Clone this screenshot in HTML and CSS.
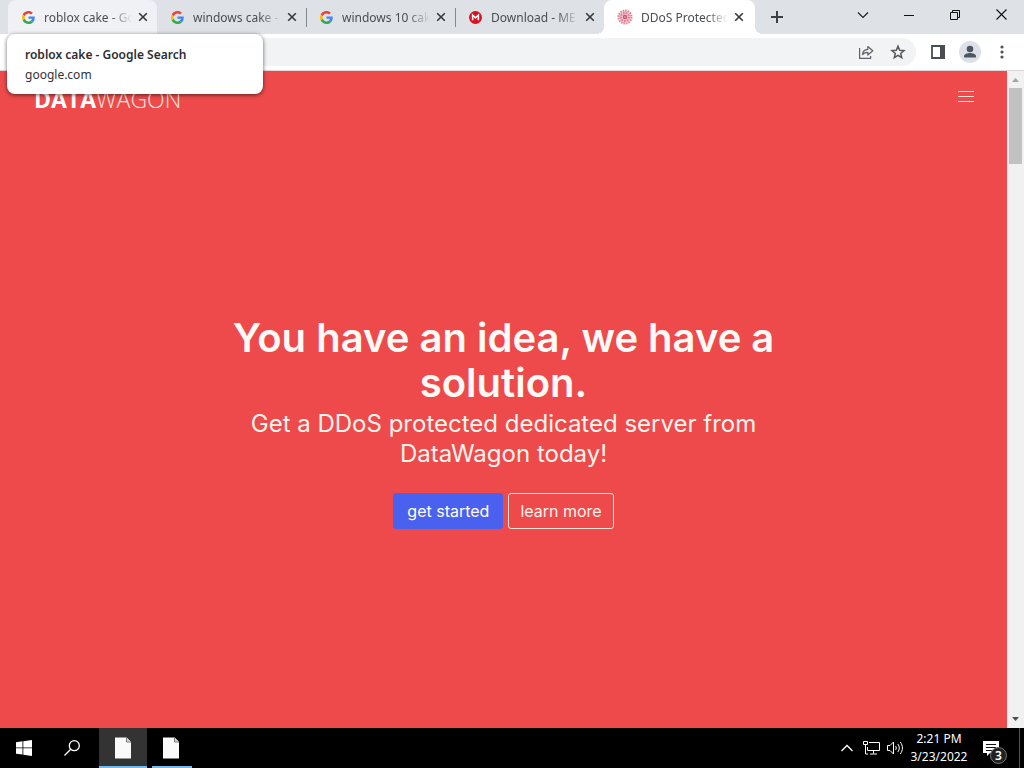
FILE: index.html
```html
<!DOCTYPE html>
<html lang="en">
<head>
  <meta charset="UTF-8">
  <meta name="viewport" content="width=device-width, initial-scale=1.0">
  <title>DDoS Protected Dedicated Servers - DataWagon</title>
  <link rel="stylesheet" href="styles.css">
</head>
<body>
  <!-- shared icons -->
  <svg class="defs" width="0" height="0" aria-hidden="true">
    <symbol id="google" viewBox="0 0 48 48">
      <path fill="#EA4335" d="M24 9.5c3.54 0 6.71 1.22 9.21 3.6l6.85-6.85C35.9 2.38 30.47 0 24 0 14.62 0 6.51 5.38 2.56 13.22l7.98 6.19C12.43 13.72 17.74 9.5 24 9.5z"/>
      <path fill="#4285F4" d="M46.98 24.55c0-1.57-.15-3.09-.38-4.55H24v9.02h12.94c-.58 2.96-2.26 5.48-4.78 7.18l7.73 6c4.51-4.18 7.09-10.36 7.09-17.65z"/>
      <path fill="#FBBC05" d="M10.53 28.59c-.48-1.45-.76-2.99-.76-4.59s.27-3.14.76-4.59l-7.98-6.19C.92 16.46 0 20.12 0 24s.92 7.54 2.56 10.78l7.97-6.19z"/>
      <path fill="#34A853" d="M24 48c6.48 0 11.93-2.13 15.89-5.81l-7.73-6c-2.15 1.45-4.92 2.3-8.16 2.3-6.26 0-11.57-4.22-13.47-9.91l-7.98 6.19C6.51 42.62 14.62 48 24 48z"/>
    </symbol>
    <symbol id="close" viewBox="0 0 10 10">
      <path d="M1.2 1.2l7.6 7.6M8.8 1.2L1.2 8.8" stroke="#35383c" stroke-width="1.6" fill="none"/>
    </symbol>
    <symbol id="file" viewBox="0 0 16 22">
      <path d="M0 .5h11.5L16 5v16.500H0z" fill="#fafafa"/>
      <path d="M11.500.5V5H16" fill="#ddd" stroke="#777" stroke-width="1"/>
    </symbol>
  </svg>

  <div class="browser">
    <div class="tab-strip">
      <div class="tab hovered">
        <svg class="favicon"><use href="#google"/></svg>
        <span class="tab-title">roblox cake - Go</span>
        <button class="tab-close" aria-label="Close tab"><svg width="10" height="10"><use href="#close"/></svg></button>
        <div class="tooltip" role="tooltip">
          <strong>roblox cake - Google Search</strong>
          <span>google.com</span>
        </div>
      </div>
      <div class="tab">
        <svg class="favicon"><use href="#google"/></svg>
        <span class="tab-title">windows cake -</span>
        <button class="tab-close" aria-label="Close tab"><svg width="10" height="10"><use href="#close"/></svg></button>
      </div>
      <div class="tab divided">
        <svg class="favicon"><use href="#google"/></svg>
        <span class="tab-title">windows 10 cak</span>
        <button class="tab-close" aria-label="Close tab"><svg width="10" height="10"><use href="#close"/></svg></button>
      </div>
      <div class="tab divided">
        <svg class="favicon" viewBox="0 0 14 14">
          <circle cx="7" cy="7" r="7" fill="#d9121f"/>
          <path d="M3.900 10V4.300L7 7.300l3.100-3V10" fill="none" stroke="#fff" stroke-width="1.700"/>
        </svg>
        <span class="tab-title">Download - ME</span>
        <button class="tab-close" aria-label="Close tab"><svg width="10" height="10"><use href="#close"/></svg></button>
      </div>
      <div class="tab active">
        <svg class="favicon wide" viewBox="0 0 16 16" fill="none" stroke="#dd8296">
          <circle cx="8" cy="8" r="6" fill="#f3ccd3" stroke="none"/>
          <circle cx="8" cy="8" r="6.500" stroke-width="2" stroke-dasharray="1.600 .9"/>
          <circle cx="8" cy="8" r="4" stroke-width="2" stroke-dasharray="1.800 .9"/>
          <circle cx="8" cy="8" r="1.500" stroke="#cc526d" stroke-width="1.500"/>
        </svg>
        <span class="tab-title">DDoS Protected</span>
        <button class="tab-close" aria-label="Close tab"><svg width="10" height="10"><use href="#close"/></svg></button>
      </div>
      <button class="new-tab" aria-label="New tab">
        <svg width="12" height="12" viewBox="0 0 12 12"><path d="M6 0v12M0 6h12" stroke="#3c4043" stroke-width="2"/></svg>
      </button>
      <div class="window-controls">
        <button aria-label="Search tabs"><svg width="12" height="12" viewBox="0 0 12 12"><path d="M1 3.500l5 5 5-5" fill="none" stroke="#222" stroke-width="1.200"/></svg></button>
        <button aria-label="Minimize"><svg width="10" height="10" viewBox="0 0 10 10"><path d="M0 5.500h10" stroke="#111"/></svg></button>
        <button aria-label="Restore"><svg width="10" height="10" viewBox="0 0 10 10"><path d="M.5 2.500h7v7h-7zM2.500 2.500v-2h7v7h-2" fill="none" stroke="#111"/></svg></button>
        <button aria-label="Close"><svg width="11" height="11" viewBox="0 0 11 11"><path d="M.5.5l10 10M10.500.5l-10 10" stroke="#111" stroke-width="1.100"/></svg></button>
      </div>
    </div>

    <div class="toolbar">
      <div class="omnibox">
        <input type="text" aria-label="Address">
        <button aria-label="Share">
          <svg width="16" height="16" viewBox="0 0 16 16" fill="none" stroke="#5f6368" stroke-width="1.200">
            <path d="M1.600 4v10.400h11V12"/>
            <path d="M4.500 10.500c.3-3.500 2.300-5 5.300-5.200V2.500l5 4.300-5 4.200V8.400c-2.500 0-4 .6-5.300 2.100z" stroke-linejoin="round"/>
          </svg>
        </button>
        <button aria-label="Bookmark this tab">
          <svg width="16" height="16" viewBox="0 0 16 16"><path d="M8 2.200l1.700 4 4.300.4-3.300 2.800 1 4.200L8 11.300l-3.700 2.300 1-4.200L2 6.600l4.300-.4z" fill="none" stroke="#55595e" stroke-width="1.500"/></svg>
        </button>
      </div>
      <div class="actions">
        <button aria-label="Side panel">
          <svg width="14" height="14" viewBox="0 0 14 14"><path d="M1 1h12v12H1z" fill="none" stroke="#4a4d51" stroke-width="1.800"/><path d="M9 0h5v14H9z" fill="#4a4d51"/></svg>
        </button>
        <button aria-label="Profile">
          <svg width="22" height="22" viewBox="0 0 22 22"><circle cx="11" cy="11" r="11" fill="#dde1e7"/><circle cx="11" cy="8" r="3.300" fill="#4c5663"/><path d="M5 16.500v-1.300C5 13 8.500 12 11 12s6 1 6 3.200v1.300z" fill="#4c5663"/></svg>
        </button>
        <button aria-label="Menu">
          <svg width="4" height="14" viewBox="0 0 4 14" fill="#505357"><circle cx="2" cy="2" r="1.600"/><circle cx="2" cy="7" r="1.600"/><circle cx="2" cy="12" r="1.600"/></svg>
        </button>
      </div>
    </div>

    <div class="viewport">
      <div class="page">
        <header class="site-header">
          <a class="logo" href="#"><b>DATA</b>WAGON</a>
          <button class="nav-toggle" aria-label="Toggle navigation">
            <svg width="16" height="12" viewBox="0 0 16 12"><path d="M0 .5h16M0 5.500h16M0 10.500h16" stroke="#ffe3d6"/></svg>
          </button>
        </header>
        <main class="hero">
          <h1>You have an idea, we have a solution.</h1>
          <p>Get a DDoS protected dedicated server from DataWagon today!</p>
          <div class="hero-buttons">
            <a class="btn btn-primary" href="#">get started</a>
            <a class="btn btn-outline" href="#">learn more</a>
          </div>
        </main>
      </div>
      <div class="scrollbar">
        <svg width="7" height="4" viewBox="0 0 7 4"><path d="M0 4l3.500-4L7 4z" fill="#a3a3a3"/></svg>
        <div class="scroll-track"><div class="scroll-thumb"></div></div>
        <svg width="7" height="4" viewBox="0 0 7 4"><path d="M0 0l3.500 4L7 0z" fill="#505050"/></svg>
      </div>
    </div>
  </div>

  <footer class="taskbar">
    <button class="task" aria-label="Start">
      <svg width="16" height="16" viewBox="0 0 16 16" fill="#fff"><path d="M0 2.200l6.500-.9v6.200H0zM7.300 1.200L16 0v7.500H7.300zM0 8.300h6.500v6.300L0 13.700zM7.300 8.300H16V16l-8.700-1.200z"/></svg>
    </button>
    <button class="task" aria-label="Search">
      <svg width="16" height="16" viewBox="0 0 16 16" fill="none" stroke="#fff" stroke-width="1.300"><circle cx="10.300" cy="5.700" r="5"/><path d="M6.700 9.300L.5 15.500"/></svg>
    </button>
    <button class="task app current" aria-label="Document"><svg width="16" height="22"><use href="#file"/></svg></button>
    <button class="task app open" aria-label="Document"><svg width="16" height="22"><use href="#file"/></svg></button>

    <div class="tray">
      <button aria-label="Show hidden icons"><svg width="12" height="8" viewBox="0 0 12 8"><path d="M.5 7L6 1.500 11.500 7" fill="none" stroke="#fff" stroke-width="1.300"/></svg></button>
      <button aria-label="Network">
        <svg width="17" height="14" viewBox="0 0 17 14" fill="none" stroke="#fff"><path d="M6 1.500h10.500v8H4.500V6M10.500 9.500v3M7 13h7M.5.5h4v3h-4zM2.500 3.500v9.500h2.500"/></svg>
      </button>
      <button aria-label="Volume">
        <svg width="17" height="14" viewBox="0 0 17 14" fill="none" stroke="#fff"><path d="M.5 4.500H3l3.500-3.500v12L3 9.500H.5zM8.500 5c1 1.200 1 2.800 0 4M10.800 3c2 2.300 2 5.700 0 8M13.200 1c3 3.500 3 8.500 0 12"/></svg>
      </button>
      <div class="clock"><time>2:21 PM</time><span>3/23/2022</span></div>
      <button class="notifications" aria-label="3 notifications">
        <svg width="16" height="15" viewBox="0 0 16 15"><path d="M0 0h16v12H7l-3 3v-3H0z" fill="#fff"/><path d="M3 3.500h10M3 6.500h10M3 9.500h7" stroke="#111"/></svg>
        <span class="badge">3</span>
      </button>
      <div class="show-desktop"></div>
    </div>
  </footer>
</body>
</html>
```
FILE: styles.css
```css
* {
  box-sizing: border-box;
}
body {
  margin: 0;
  height: 100vh;
  display: flex;
  flex-direction: column;
  overflow: hidden;
  font-family: "Noto Sans", "Open Sans", sans-serif;
  font-size: 12px;
  color: #4a4d51;
}
button {
  display: flex;
  align-items: center;
  justify-content: center;
  padding: 0;
  border: none;
  background: none;
  color: inherit;
  font: inherit;
}
svg {
  display: block;
  flex: none;
}
.defs {
  position: absolute;
}
.browser {
  flex: 1;
  min-height: 0;
  display: flex;
  flex-direction: column;
}

/* tabs */
.tab-strip {
  display: flex;
  height: 34px;
  padding-left: 8px;
  background: #dee1e6;
}
.tab {
  position: relative;
  display: flex;
  align-items: center;
  flex: 0 1 149px;
  min-width: 0;
  padding: 0 6px 0 14px;
}
.tab.hovered {
  background: #eff1f4;
  border-radius: 8px 8px 0 0;
}
.tab.active {
  flex-basis: 151px;
  background: #fff;
  border-radius: 8px 8px 0 0;
  padding: 0 8px 0 13px;
}
/* flared feet of the active tab */
.tab.active::before,
.tab.active::after {
  content: "";
  position: absolute;
  bottom: 0;
  width: 8px;
  height: 8px;
}
.tab.active::before {
  right: 100%;
  background: radial-gradient(circle at 0 0, #dee1e6 8px, #fff 8px);
}
.tab.active::after {
  left: 100%;
  background: radial-gradient(circle at 100% 0, #dee1e6 8px, #fff 8px);
}
.tab.divided::before {
  content: "";
  position: absolute;
  left: 0;
  top: 8px;
  width: 1px;
  height: 19px;
  background: #85888d;
}
.favicon {
  width: 13px;
  height: 13px;
  margin-right: 9px;
}
.favicon.wide {
  width: 16px;
  height: 16px;
  margin-right: 8px;
}
.tab-title {
  flex: 1;
  overflow: hidden;
  white-space: nowrap;
  -webkit-mask-image: linear-gradient(to right, #000 75%, transparent);
  mask-image: linear-gradient(to right, #000 75%, transparent);
}
.tab-close {
  width: 16px;
  height: 16px;
  margin-left: 3px;
}
.tooltip {
  position: absolute;
  z-index: 2;
  left: -1px;
  top: 34px;
  width: 256px;
  display: flex;
  flex-direction: column;
  padding: 11px 18px 9px;
  border-radius: 8px;
  background: #fff;
  box-shadow: 0 1px 4px rgba(0, 0, 0, 0.6);
  line-height: 20px;
  color: #303236;
}
.tooltip strong {
  font-weight: 600;
  color: #2c2e32;
}
.new-tab {
  width: 28px;
  margin-left: 8px;
}
.window-controls {
  display: flex;
  height: 29px;
  margin-left: auto;
}
.window-controls button {
  width: 46px;
}

/* toolbar */
.toolbar {
  display: flex;
  align-items: center;
  height: 37px;
  padding-left: 100px;
  background: #fff;
  border-bottom: 1px solid #e3d4d6;
}
.omnibox {
  flex: 1;
  display: flex;
  align-items: center;
  height: 28px;
  padding-right: 2px;
  border-radius: 14px;
  background: #f1f3f4;
}
.omnibox input {
  flex: 1;
  min-width: 0;
  border: none;
  background: none;
}
.omnibox button {
  width: 32px;
}
.actions {
  display: flex;
  margin-left: 6px;
  padding-right: 6px;
}
.actions button {
  width: 32px;
}

/* web page */
.viewport {
  flex: 1;
  min-height: 0;
  display: flex;
}
.page {
  flex: 1;
  display: flex;
  flex-direction: column;
  background: #ee4a4b;
  color: #fff4ec;
}
.site-header {
  display: flex;
  align-items: flex-start;
  justify-content: space-between;
  height: 44px;
  padding: 13px 33px 0 34px;
}
.logo {
  font-family: "Open Sans", sans-serif;
  font-size: 23px;
  font-weight: 300;
  line-height: 30px;
  color: #ffe9df;
  text-decoration: none;
}
.logo b {
  font-weight: 700;
  color: #fff;
}
.nav-toggle {
  height: 26px;
}
.hero {
  flex: 1;
  display: flex;
  flex-direction: column;
  align-items: center;
  justify-content: center;
  font-family: Inter, sans-serif;
  text-align: center;
}
.hero h1 {
  max-width: 560px;
  margin: 0;
  font-size: 40px;
  font-weight: 600;
  line-height: 45px;
  color: #fffaf5;
}
.hero p {
  max-width: 560px;
  margin: 4px 0 24px;
  font-size: 24px;
  line-height: 30px;
}
.hero-buttons {
  display: flex;
  gap: 5px;
}
.btn {
  padding: 5px 13px;
  border: 1px solid;
  border-radius: 3px;
  font-size: 16px;
  line-height: 24px;
  text-decoration: none;
}
.btn-primary {
  background: #4a60ee;
  border-color: #4a60ee;
  color: #fff;
}
.btn-outline {
  padding: 5px 11px;
  border-color: #ffe3d6;
  color: #fff4ec;
}
.scrollbar {
  width: 17px;
  display: flex;
  flex-direction: column;
  align-items: center;
  padding: 7px 0;
  background: #f1f1f1;
}
.scroll-track {
  flex: 1;
  padding: 6px 0;
}
.scroll-thumb {
  width: 13px;
  height: 76px;
  background: #c1c1c1;
}

/* taskbar */
.taskbar {
  display: flex;
  height: 40px;
  background: #000;
  color: #fff;
}
.task {
  width: 48px;
}
.task.app {
  position: relative;
}
.task.current {
  margin: 0 0 0 3px;
  background: #333;
}
.task.app::after {
  content: "";
  position: absolute;
  bottom: 0;
  left: 0;
  right: 0;
  height: 2px;
  background: #76b9ed;
}
.task.open::after {
  left: 5px;
  right: 3px;
}
.tray {
  display: flex;
  margin-left: auto;
}
.tray button {
  width: 24px;
}
.clock {
  display: flex;
  flex-direction: column;
  align-items: center;
  justify-content: center;
  width: 64px;
  line-height: 18px;
}
.tray .notifications {
  position: relative;
  width: 40px;
  margin-right: 8px;
}
.badge {
  position: absolute;
  left: 19px;
  top: 19px;
  width: 17px;
  height: 17px;
  border: 1px solid #777;
  border-radius: 50%;
  background: #222;
  font-weight: 600;
  line-height: 15px;
}
.show-desktop {
  width: 5px;
  border-left: 1px solid #555;
}
```
